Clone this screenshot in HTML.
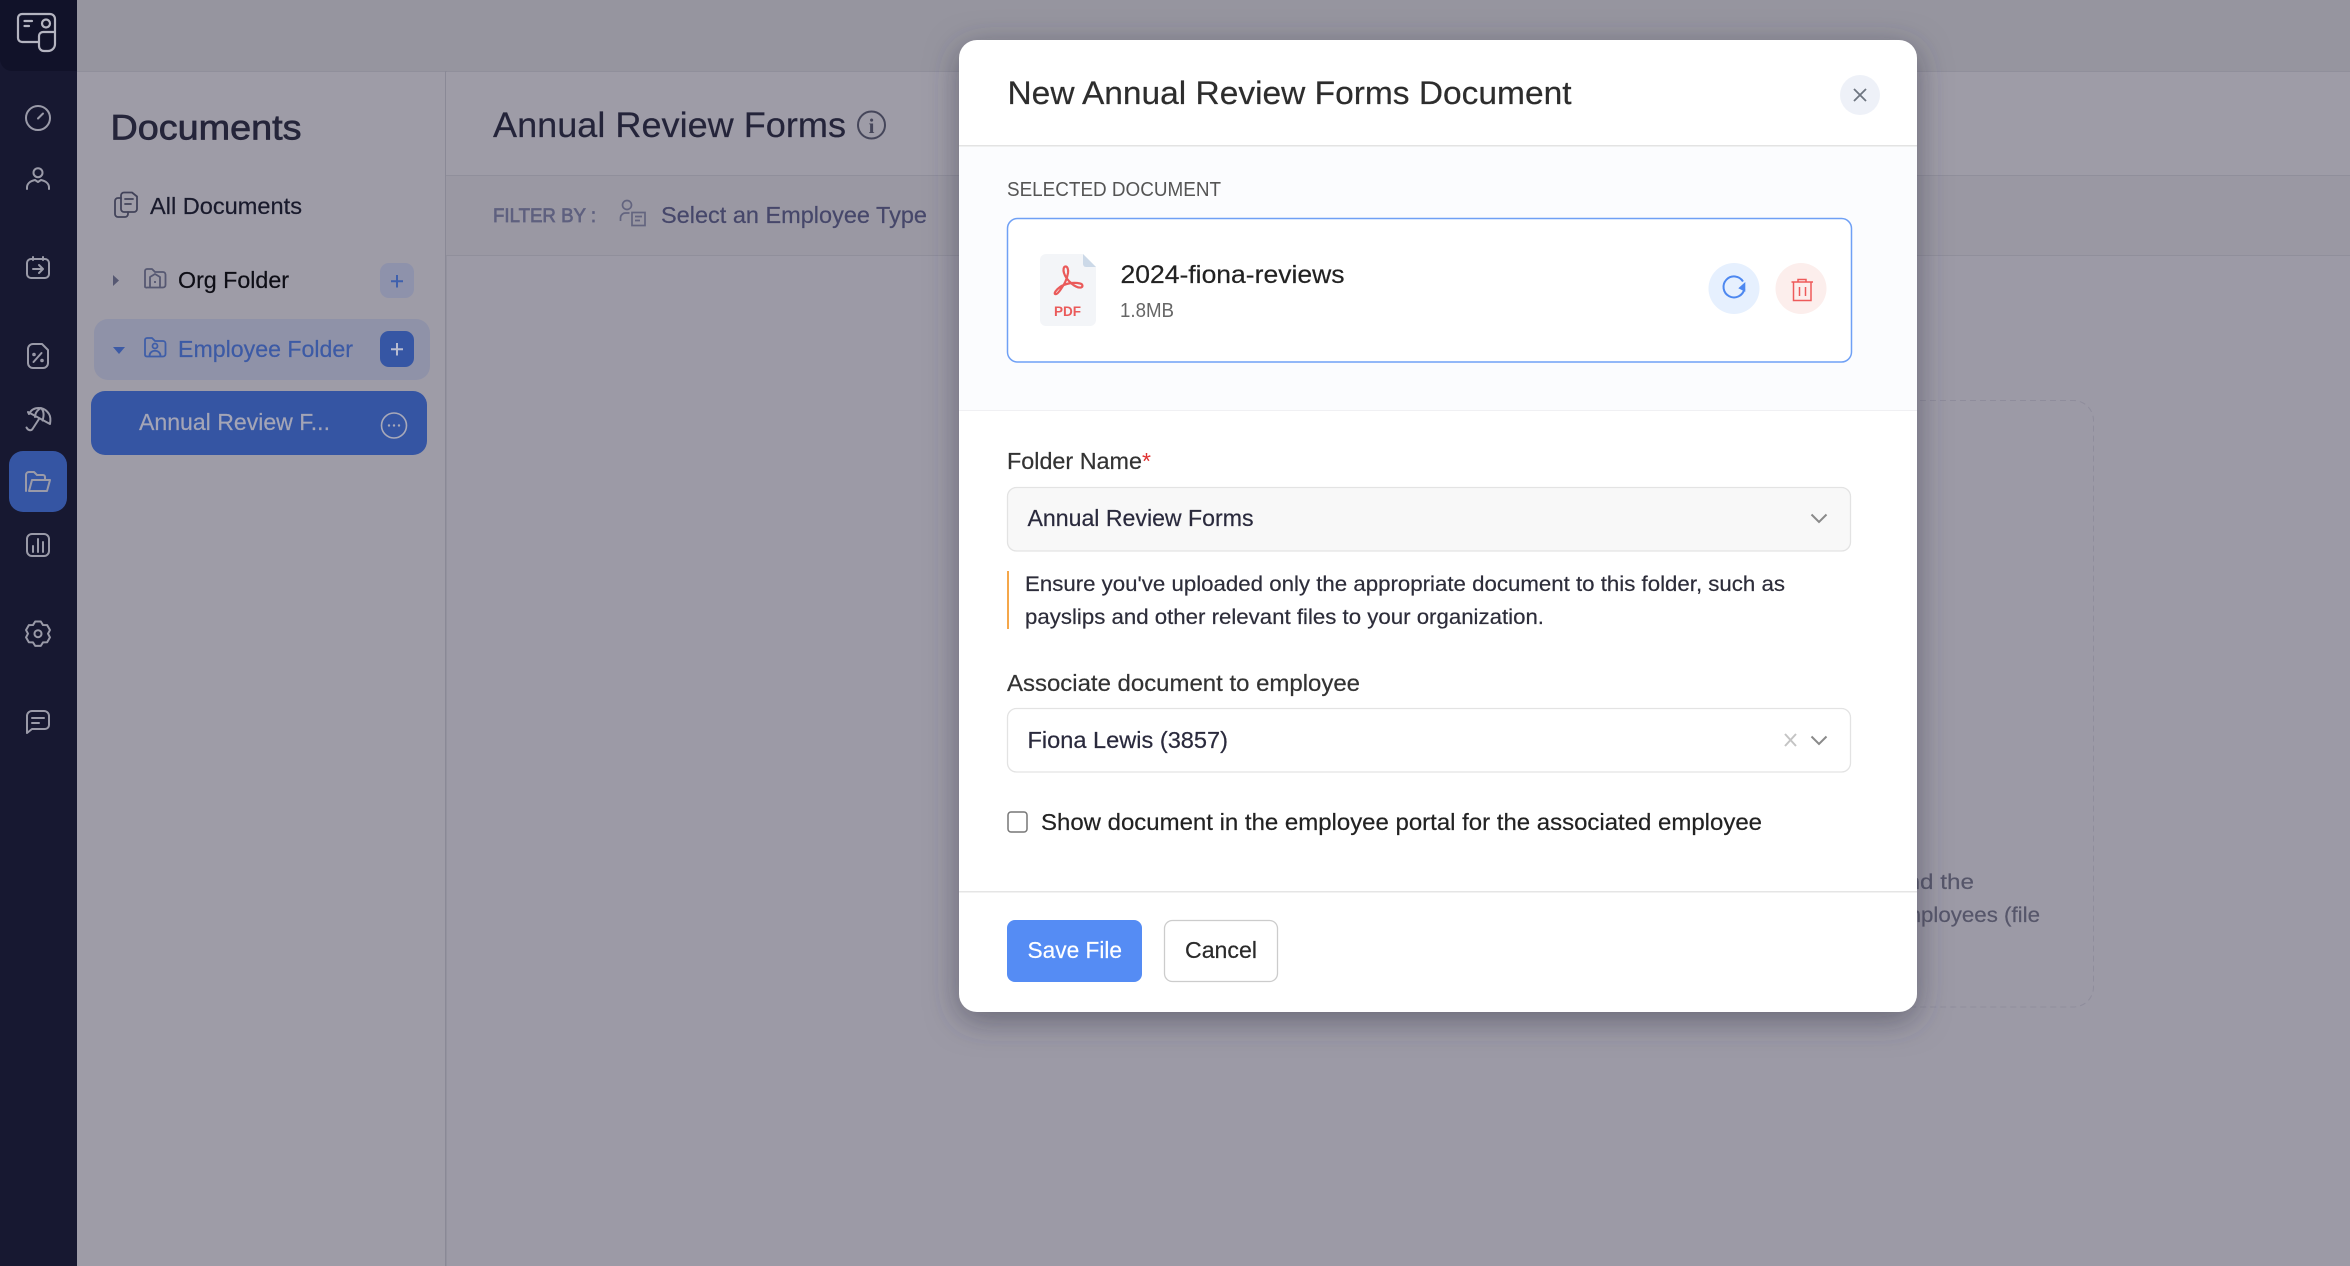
<!DOCTYPE html>
<html lang="en"><head><meta charset="utf-8"><title>Documents</title>
<style>
html,body{margin:0;padding:0;width:2350px;height:1266px;overflow:hidden;background:#9c9aa5}
svg{display:block;font-family:"Liberation Sans",Arial,sans-serif}
text{fill:currentColor}
.m{stroke:currentColor;stroke-width:.7px}
.r{stroke:currentColor;stroke-width:.2px}
.ic{fill:none;stroke:#9a9aa8;stroke-width:2;stroke-linecap:round;stroke-linejoin:round}
</style></head><body>
<svg width="2350" height="1266" viewBox="0 0 2350 1266" xmlns="http://www.w3.org/2000/svg">
<defs><filter id="sh" x="-10%" y="-10%" width="120%" height="125%"><feDropShadow dx="0" dy="8" stdDeviation="16" flood-color="#3a3a4c" flood-opacity=".55"/></filter></defs>
<!-- backgrounds -->
<rect width="2350" height="1266" fill="#9c9aa6"/>
<rect x="77" width="2273" height="71" fill="#96959f"/>
<rect x="77" y="71" width="2273" height="1" fill="#908f9b"/>
<rect x="77" y="72" width="368" height="1194" fill="#9e9ca7"/>
<rect x="445" y="71" width="1.5" height="1195" fill="#8a8996"/>
<rect x="446" y="72" width="1904" height="103" fill="#9e9ca7"/>
<rect x="446" y="175" width="1904" height="1" fill="#908f9b"/>
<rect x="446" y="176" width="1904" height="79" fill="#9a98a3"/>
<rect x="446" y="255" width="1904" height="1" fill="#908f9b"/>
<!-- sidebar -->
<rect width="77" height="1266" fill="#171831"/>
<path d="M0 0H77V71H12A12 12 0 0 1 0 59Z" fill="#111229"/>
<g class="ic" style="stroke:#b4b4c0;stroke-width:2.2">
<path d="M38 42H22a4 4 0 0 1-4-4V18a4 4 0 0 1 4-4H50a5 5 0 0 1 5 5V44a7 7 0 0 1-7 7H44a5 5 0 0 1-5-5V36a4 4 0 0 1 4-4H55"/>
<path d="M24.500 21H32M24.500 26H29"/><circle cx="46" cy="23.500" r="4"/>
</g>
<rect x="9" y="451" width="58" height="61" rx="14" fill="#3555a3"/>
<g class="ic">
<circle cx="38" cy="118" r="12"/><path d="M38 118.500L43 113.500"/>
<circle cx="38" cy="172.700" r="4.500"/><path d="M27 189v-1.500c0-4 3.500-6.500 8-7.500l3 2 3-2c4.500 1 8 3.500 8 7.500v1.500"/>
<rect x="27" y="259" width="22" height="19" rx="4"/><path d="M33 257v3M43 257v3M33 269H43M39 265l4 4-4 4"/>
<path d="M33 344H42L48 350V363a5 5 0 0 1-5 5H33a5 5 0 0 1-5-5V349a5 5 0 0 1 5-5Z"/><path d="M41.500 353L33.500 362"/><circle cx="34" cy="354.500" r=".8"/><circle cx="42" cy="360.500" r=".8"/>
<path d="M29 414C33 406 44 406 49 414C51 417 50.500 421 50 424L28 412ZM35 417C35 412 39 409 41 408C44 411 44 416 42.500 420.500"/><path d="M39 419L32.500 429C31 431 28 430.500 26.500 427.500"/>
<path d="M26 491V475a3 3 0 0 1 3-3h5l3 3h6a2 2 0 0 1 2 2v3M29 491l3-11h18l-3 11Z"/>
<rect x="27" y="534" width="22" height="22" rx="5"/><path d="M33 546v6M38 539v13M43 542v10"/>
<path transform="translate(38 633.700)" d="M-2.800-12.200H2.800L5-8.660 9.140-8.520 11.950-3.650 10 0 11.950 3.650 9.140 8.520 5 8.660 2.800 12.200H-2.800L-5 8.660-9.140 8.520-11.950 3.650-10 0-11.950-3.650-9.140-8.520-5-8.660Z"/>
<circle cx="38" cy="633.700" r="3.500"/>
<path d="M27 733V716a5 5 0 0 1 5-5h12a5 5 0 0 1 5 5v9a4 4 0 0 1-4 4H32ZM32 718H44M32 723H39"/>
</g>
<!-- secondary panel -->
<text x="110.500" y="139.500" font-size="35" color="#25253a" class="m" textLength="191" lengthAdjust="spacingAndGlyphs">Documents</text>
<g fill="none" stroke="#42435a" stroke-width="1.800" stroke-linejoin="round" stroke-linecap="round">
<path d="M121 198h-3a3 3 0 0 0-3 3v13a3 3 0 0 0 3 3h7a3 3 0 0 0 3-3v-2"/>
<path d="M124 192.500h8l5 4V209a3 3 0 0 1-3 3h-10a3 3 0 0 1-3-3V195.500a3 3 0 0 1 3-3ZM125 199h8M125 204h6"/>
</g>
<text x="150" y="214" font-size="23" color="#191a2c" class="r" textLength="152" lengthAdjust="spacingAndGlyphs">All Documents</text>
<path d="M113 275l6 5.500-6 5.500Z" fill="#565872"/>
<g fill="none" stroke="#565872" stroke-width="1.800" stroke-linejoin="round">
<path d="M145 287V271a2 2 0 0 1 2-2h5l3 3h8a2.500 2.500 0 0 1 2.500 2.500V285a2.500 2.500 0 0 1-2.500 2.500H147a2 2 0 0 1-2-.5ZM150 287v-10l5-3 5 3v10M155 281v2"/>
</g>
<text x="178" y="288" font-size="23" color="#0e0e16" class="r" textLength="111" lengthAdjust="spacingAndGlyphs">Org Folder</text>
<rect x="380" y="263" width="34" height="35" rx="9" fill="#8e92ab"/>
<path d="M397 275v12.500M391 281.200h12" stroke="#3f60ad" stroke-width="2"/>
<rect x="94" y="319" width="336" height="61" rx="14" fill="#8f92a8"/>
<path d="M113 347h12l-6 7Z" fill="#3c5aa5"/>
<g fill="none" stroke="#3f5ea8" stroke-width="1.800" stroke-linejoin="round">
<path d="M145 355V340a2 2 0 0 1 2-2h5l3 3h8a2.500 2.500 0 0 1 2.500 2.500V354a2.500 2.500 0 0 1-2.500 2.500H147a2 2 0 0 1-2-1.500Z"/>
<circle cx="155" cy="346" r="2.500"/><path d="M149.500 356c0-7 11-7 11 0"/>
</g>
<text x="178" y="357" font-size="23" color="#3c5aa5" class="r" textLength="175" lengthAdjust="spacingAndGlyphs">Employee Folder</text>
<rect x="380" y="331" width="34" height="36" rx="9" fill="#3656a4"/>
<path d="M397 343v12.500M391 349.200h12" stroke="#b9bcd0" stroke-width="2"/>
<rect x="91" y="391" width="336" height="64" rx="14" fill="#3555a3"/>
<text x="139" y="430" font-size="23" color="#a4a5b6" class="r" textLength="191" lengthAdjust="spacingAndGlyphs">Annual Review F...</text>
<circle cx="394" cy="425.500" r="12.500" fill="none" stroke="#a8a9b9" stroke-width="1.600"/>
<g fill="#a8a9b9"><circle cx="389" cy="425.500" r="1.200"/><circle cx="394" cy="425.500" r="1.200"/><circle cx="399" cy="425.500" r="1.200"/></g>
<!-- main -->
<text x="493" y="137" font-size="35" color="#24243a" class="r" textLength="353" lengthAdjust="spacingAndGlyphs">Annual Review Forms</text>
<circle cx="871.500" cy="125" r="13.500" fill="none" stroke="#45465a" stroke-width="2"/>
<text x="871.500" y="133" font-size="21" font-family="Liberation Serif" font-weight="bold" color="#45465a" text-anchor="middle">i</text>
<text x="493" y="222" font-size="19.500" color="#5e607f" class="m" textLength="103" lengthAdjust="spacingAndGlyphs">FILTER BY :</text>
<g fill="none" stroke="#63647f" stroke-width="1.700">
<circle cx="627" cy="205" r="4.500"/><path d="M620.500 221v-3a5 5 0 0 1 5-5h4"/>
<rect x="632" y="212.500" width="13" height="13"/><path d="M635 216.500h7M635 220.500h5"/>
</g>
<text x="661" y="223" font-size="23" color="#46476a" class="r" textLength="266" lengthAdjust="spacingAndGlyphs">Select an Employee Type</text>
<rect x="1500" y="400.500" width="593.500" height="606.500" rx="20" fill="none" stroke="#8f8d9c" stroke-width="1" stroke-dasharray="6 4"/>
<text x="1920" y="889" font-size="21.500" color="#56566a" text-anchor="end" class="r">an</text>
<text x="1920" y="889" font-size="21.500" color="#56566a" class="r" textLength="54" lengthAdjust="spacingAndGlyphs">d the</text>
<text x="1921" y="922" font-size="21.500" color="#56566a" text-anchor="end" class="r">em</text>
<text x="1921" y="922" font-size="21.500" color="#56566a" class="r" textLength="119" lengthAdjust="spacingAndGlyphs">ployees (file</text>
<!-- modal -->
<rect x="959" y="40" width="958" height="972" rx="18" fill="#fff" filter="url(#sh)"/>
<path d="M959 146H1917V410H959Z" fill="#fbfcfe"/>
<rect x="959" y="145" width="958" height="1.500" fill="#e3e3e3"/>
<rect x="959" y="410" width="958" height="1" fill="#f0f0f3"/>
<text x="1007.500" y="104" font-size="32" color="#2d2d2d" class="r" textLength="564" lengthAdjust="spacingAndGlyphs">New Annual Review Forms Document</text>
<circle cx="1860" cy="95" r="20" fill="#eef1f8"/>
<path d="M1854 89l12 12M1866 89l-12 12" stroke="#6e7580" stroke-width="1.800"/>
<text x="1007" y="196" font-size="20" color="#555" textLength="214" lengthAdjust="spacingAndGlyphs">SELECTED DOCUMENT</text>
<rect x="1007.500" y="218.500" width="844" height="143.500" rx="10" fill="#fff" stroke="#6fa0f5" stroke-width="1.500"/>
<path d="M1046 254H1083L1096 267V320a6 6 0 0 1-6 6H1046a6 6 0 0 1-6-6V260a6 6 0 0 1 6-6Z" fill="#f3f5f8"/>
<path d="M1083 254L1096 267H1086a3 3 0 0 1-3-3Z" fill="#ccd9e8"/>
<path d="M1065.500 266.500C1063.500 266.500 1063 270 1064 273C1065 276.500 1067.500 280 1071.500 283.500C1074.500 286 1078 288 1081 287.500C1083.500 286.500 1082.500 284 1080 283.500C1073 282 1065 283.500 1060 287C1056 290 1054 293 1055 294C1056.500 295 1059 292 1061 289C1064 285 1067 279 1068 273C1068.500 269.500 1067.500 266.500 1065.500 266.500Z" fill="none" stroke="#ea5a5a" stroke-width="2.200" stroke-linejoin="round"/>
<text x="1054" y="316" font-size="13.500" font-weight="bold" color="#ea5a5a" textLength="27" lengthAdjust="spacingAndGlyphs">PDF</text>
<text x="1120.500" y="283" font-size="25" color="#222" class="r" textLength="224" lengthAdjust="spacingAndGlyphs">2024-fiona-reviews</text>
<text x="1120" y="317" font-size="20" color="#666" textLength="54" lengthAdjust="spacingAndGlyphs">1.8MB</text>
<circle cx="1734" cy="288.500" r="25.500" fill="#e6f0fe"/>
<circle cx="1801" cy="288.500" r="25.500" fill="#fceeec"/>
<path d="M1743 281.500A10.500 10.500 0 1 0 1744.300 289" fill="none" stroke="#4d88f0" stroke-width="2"/>
<path d="M1745.300 282V291.700L1738.300 288.300Z" fill="#4d88f0"/>
<g fill="none" stroke="#ee5a5a" stroke-width="1.500">
<path d="M1791.500 282H1813M1798 282V279.500H1806V282M1793.500 282V300.500H1811V282M1799.500 287V296M1805.500 287V296"/>
</g>
<text x="1007" y="469" font-size="23" color="#333" class="r" textLength="135" lengthAdjust="spacingAndGlyphs">Folder Name</text>
<text x="1142" y="469" font-size="23" color="#e03131">*</text>
<rect x="1007.500" y="487.500" width="843" height="63.500" rx="9" fill="#f8f8f8" stroke="#e3e3e3" stroke-width="1.300"/>
<text x="1027.500" y="526" font-size="23" color="#2a2a3d" class="r" textLength="226" lengthAdjust="spacingAndGlyphs">Annual Review Forms</text>
<path d="M1811.500 514.500l7.500 7.500 7.500-7.500" fill="none" stroke="#8a8a8a" stroke-width="2"/>
<rect x="1007" y="571" width="2" height="58" fill="#f5a74a"/>
<text x="1025" y="591" font-size="21.500" color="#2d2d3a" class="r" textLength="760" lengthAdjust="spacingAndGlyphs">Ensure you've uploaded only the appropriate document to this folder, such as</text>
<text x="1025" y="624" font-size="21.500" color="#2d2d3a" class="r" textLength="519" lengthAdjust="spacingAndGlyphs">payslips and other relevant files to your organization.</text>
<text x="1007" y="691" font-size="23" color="#333" class="r" textLength="353" lengthAdjust="spacingAndGlyphs">Associate document to employee</text>
<rect x="1007.500" y="708.500" width="843" height="63.500" rx="9" fill="#fff" stroke="#e3e3e3" stroke-width="1.300"/>
<text x="1027.500" y="748" font-size="23" color="#2a2a3d" class="r" textLength="200.500" lengthAdjust="spacingAndGlyphs">Fiona Lewis (3857)</text>
<path d="M1785 734l11 12M1796 734l-11 12" stroke="#c4c4c4" stroke-width="2"/>
<path d="M1811.500 736.500l7.500 7.500 7.500-7.500" fill="none" stroke="#8a8a8a" stroke-width="2"/>
<rect x="1008" y="812" width="19" height="20" rx="3" fill="#fff" stroke="#777" stroke-width="1.500"/>
<text x="1041" y="830" font-size="23" color="#222" class="r" textLength="721" lengthAdjust="spacingAndGlyphs">Show document in the employee portal for the associated employee</text>
<rect x="959" y="891" width="958" height="1.500" fill="#e5e5e5"/>
<rect x="1007" y="920" width="135" height="62" rx="8" fill="#558cf4"/>
<text x="1027.500" y="958" font-size="23" color="#fff" class="r" textLength="94.500" lengthAdjust="spacingAndGlyphs">Save File</text>
<rect x="1164.500" y="920.500" width="113" height="61" rx="8" fill="#fff" stroke="#ccc" stroke-width="1.300"/>
<text x="1185" y="958" font-size="23" color="#2a2a2a" class="r" textLength="72" lengthAdjust="spacingAndGlyphs">Cancel</text>
</svg>
</body></html>
